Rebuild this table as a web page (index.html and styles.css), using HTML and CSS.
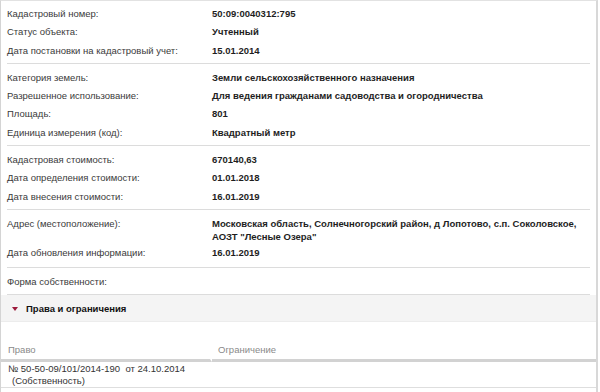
FILE: index.html
```html
<!DOCTYPE html>
<html lang="ru">
  <head>
    <meta charset="UTF-8" />
    <title>Объект недвижимости</title>
    <link rel="stylesheet" href="styles.css">
  </head>
  <body>
    <div class="card">
      <div class="group first">
        <div class="row"><span class="label">Кадастровый номер:</span><span class="value">50:09:0040312:795</span></div>
        <div class="row"><span class="label">Статус объекта:</span><span class="value">Учтенный</span></div>
        <div class="row"><span class="label">Дата постановки на кадастровый учет:</span><span class="value">15.01.2014</span></div>
      </div>

      <div class="group">
        <div class="row"><span class="label">Категория земель:</span><span class="value">Земли сельскохозяйственного назначения</span></div>
        <div class="row"><span class="label">Разрешенное использование:</span><span class="value">Для ведения гражданами садоводства и огородничества</span></div>
        <div class="row"><span class="label">Площадь:</span><span class="value">801</span></div>
        <div class="row"><span class="label">Единица измерения (код):</span><span class="value">Квадратный метр</span></div>
      </div>

      <div class="group">
        <div class="row"><span class="label">Кадастровая стоимость:</span><span class="value">670140,63</span></div>
        <div class="row"><span class="label">Дата определения стоимости:</span><span class="value">01.01.2018</span></div>
        <div class="row"><span class="label">Дата внесения стоимости:</span><span class="value">16.01.2019</span></div>
      </div>

      <div class="group address">
        <div class="row multi"><span class="label">Адрес (местоположение):</span><span class="value">Московская область, Солнечногорский район, д Лопотово, с.п. Соколовское, АОЗТ "Лесные Озера"</span></div>
        <div class="row"><span class="label">Дата обновления информации:</span><span class="value">16.01.2019</span></div>
      </div>

      <div class="group">
        <div class="row"><span class="label">Форма собственности:</span><span class="value"></span></div>
      </div>

      <div class="section-head">
        <span class="arrow"></span>
        <span>Права и ограничения</span>
      </div>

      <table class="rights">
        <thead>
          <tr>
            <th class="col-right">Право</th>
            <th>Ограничение</th>
          </tr>
        </thead>
        <tbody>
          <tr>
            <td>№ 50-50-09/101/2014-190&nbsp; от 24.10.2014<br><span class="kind">(Собственность)</span></td>
            <td></td>
          </tr>
        </tbody>
      </table>
    </div>
  </body>
</html>
```

FILE: styles.css
```css
body {
  margin: 0;
  padding: 0;
  font-family: "Liberation Sans", Arial, sans-serif;
  font-size: 9.5px;
  color: #333;
  background: #fff;
}

.card {
  box-sizing: border-box;
  width: 598px;
  height: 392px;
  border-top: 1px solid #e2e2e2;
  border-left: 1px solid #d4d4d4;
  border-right: 2px solid #d8d8d8;
  overflow: hidden;
}

.group {
  margin: 0 6px;
  padding: 5px 0 3px;
  border-bottom: 1px solid #dcdcdc;
}

.group.first {
  padding-top: 4px;
}

.group.address {
  padding-bottom: 5px;
}

.row {
  display: flex;
  padding: 2px 0;
  line-height: 14.3px;
}

.row.multi {
  padding: 2px 0 0;
  line-height: 13.3px;
}

.label {
  width: 205px;
  flex-shrink: 0;
  color: #3a3a3a;
}

.value {
  font-weight: bold;
  color: #1e1e1e;
}

.section-head {
  display: flex;
  align-items: center;
  height: 26px;
  background: #f4f4f4;
  border-bottom: 1px solid #ececec;
  font-weight: bold;
  color: #111;
}

.arrow {
  width: 0;
  height: 0;
  margin: 1px 8px 0 11px;
  border-left: 3px solid transparent;
  border-right: 3px solid transparent;
  border-top: 4px solid #9c1b3c;
}

.rights {
  width: 100%;
  border-collapse: separate;
  border-spacing: 0;
}

.rights th {
  text-align: left;
  font-weight: normal;
  color: #8a8a8a;
  padding: 21px 6px 2px;
  line-height: 14px;
  border-bottom: 3px solid #d2d2d2;
}

.rights th.col-right {
  width: 196px;
  padding-left: 7px;
  border-right: 2px solid #fff;
}

.rights td {
  padding: 1px 7px 0;
  line-height: 12px;
  vertical-align: top;
  color: #333;
  border-bottom: 1px solid #dedede;
}

.kind {
  padding-left: 4px;
}
```
